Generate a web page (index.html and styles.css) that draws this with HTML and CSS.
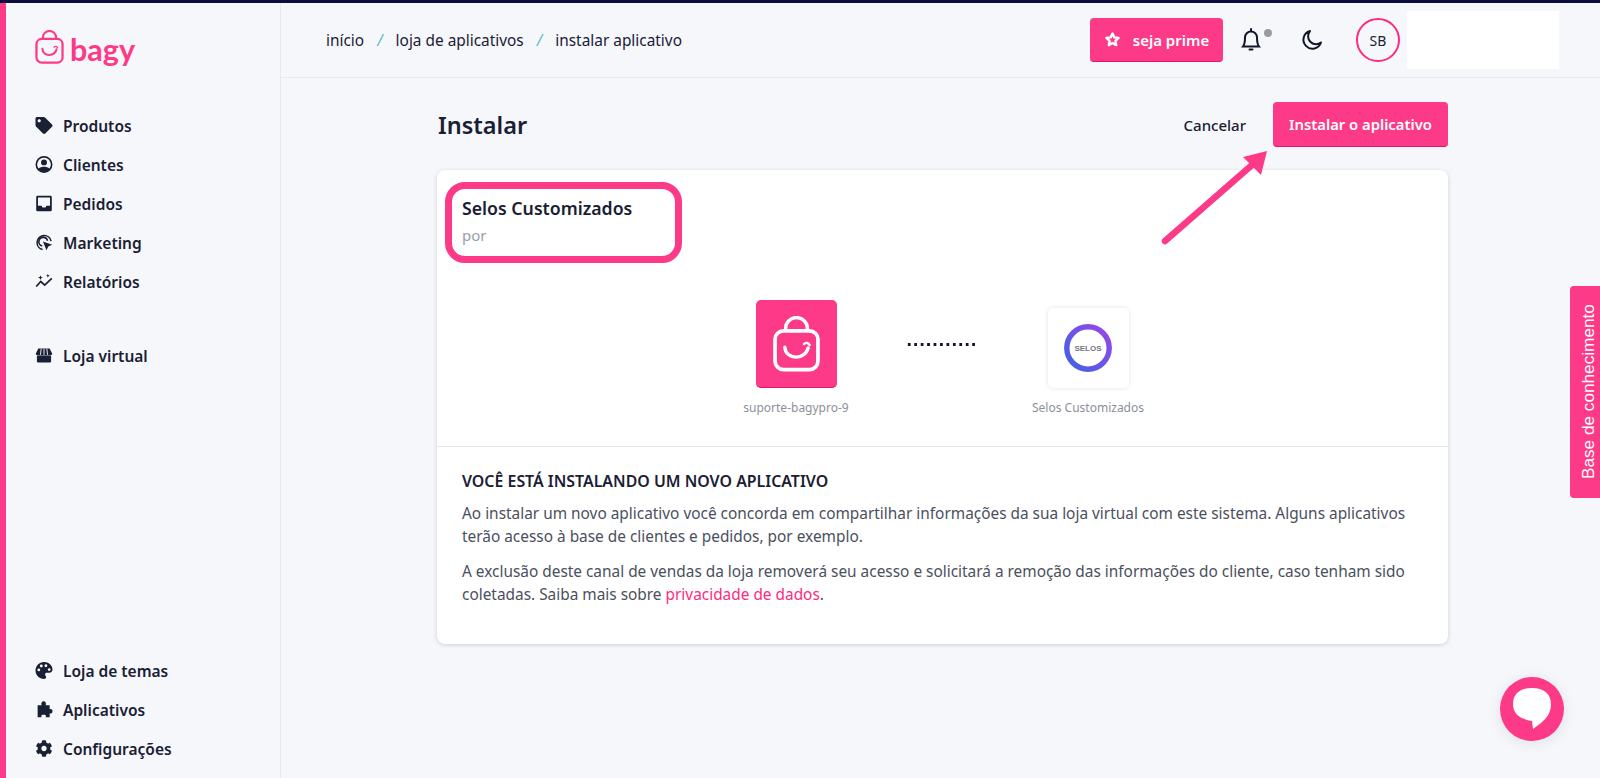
FILE: index.html
```html
<!DOCTYPE html>
<html lang="pt-BR">
<head>
    <meta charset="UTF-8">
    <meta name="viewport" content="width=device-width, initial-scale=1.0">
    <title>Instalar aplicativo</title>
    <link rel="stylesheet" href="styles.css">
</head>
<body>
    <svg class="defs" width="0" height="0">
        <symbol id="bag" viewBox="0 0 30 36">
            <path d="M8 9.500V8a7 7 0 0 1 14 0v1.500" fill="none" stroke="currentColor" stroke-width="2.200"/>
            <rect x="1.200" y="9.500" width="27.600" height="25" rx="5.500" fill="none" stroke="currentColor" stroke-width="2.400"/>
            <path d="M7.500 20c.5 8.500 13 8.500 15 .5" fill="none" stroke="currentColor" stroke-width="2.200" stroke-linecap="round"/>
            <path d="M19.800 18q2.300-1.600 3.600.6" fill="none" stroke="currentColor" stroke-width="1.500" stroke-linecap="round"/>
        </symbol>
    </svg>

    <div class="top-strip"></div>
    <div class="app">
        <!-- Sidebar -->
        <aside class="sidebar">
            <div class="logo">
                <svg class="logo-bag"><use href="#bag"/></svg>
                <span class="logo-text">bagy</span>
            </div>
            <nav class="nav-main">
                <a class="nav-item">
                    <svg class="nav-icon" viewBox="0 0 512 512"><path d="M0 252.118V48C0 21.49 21.49 0 48 0h204.118a48 48 0 0 1 33.941 14.059l211.882 211.882c18.745 18.745 18.745 49.137 0 67.882L293.823 497.941c-18.745 18.745-49.137 18.745-67.882 0L14.059 286.059A48 48 0 0 1 0 252.118zM112 64c-26.51 0-48 21.49-48 48s21.49 48 48 48 48-21.49 48-48-21.49-48-48-48z"/></svg>
                    Produtos
                </a>
                <a class="nav-item">
                    <svg class="nav-icon" viewBox="0 0 24 24"><path fill-rule="evenodd" d="M12 0a12 12 0 1 0 0 24 12 12 0 0 0 0-24zm0 2.500a9.500 9.500 0 0 1 7.700 15.100C17.800 15.800 15 15 12 15s-5.800.8-7.700 2.600A9.500 9.500 0 0 1 12 2.500z"/><circle cx="12" cy="9" r="4.200"/></svg>
                    Clientes
                </a>
                <a class="nav-item">
                    <svg class="nav-icon" viewBox="0 0 24 24"><path fill-rule="evenodd" d="M3 1h18a2 2 0 0 1 2 2v18a2 2 0 0 1-2 2H3a2 2 0 0 1-2-2V3a2 2 0 0 1 2-2zm.5 2.500V15h5l1.500 2.500h4l1.500-2.500h5V3.500z"/></svg>
                    Pedidos
                </a>
                <a class="nav-item">
                    <svg class="nav-icon" viewBox="0 0 24 24"><path d="M10 22A10 10 0 1 1 22 10" fill="none" stroke="currentColor" stroke-width="2.200"/><path d="M9.500 17A6.200 6.200 0 1 1 17 9.500" fill="none" stroke="currentColor" stroke-width="2.200"/><path d="M10.500 10.500l13 4.500-5.500 2.500-2.500 5.500z"/></svg>
                    Marketing
                </a>
                <a class="nav-item">
                    <svg class="nav-icon" viewBox="0 0 24 24"><path d="M1 19l6.500-7 5.500 5 10-9.500" fill="none" stroke="currentColor" stroke-width="2.400"/><path d="M7 3l1 2.500L10.500 6.500 8 7.500 7 10 6 7.500 3.500 6.500 6 5.500zM17.500 1l.8 2 2 .8-2 .8-.8 2-.8-2-2-.8 2-.8z"/></svg>
                    Relatórios
                </a>
                <a class="nav-item nav-store">
                    <svg class="nav-icon" viewBox="0 0 24 24"><path d="M4 2h16l3.500 7a3 3 0 0 1-3 3H3.500a3 3 0 0 1-3-3z"/><path d="M2 12.500h20V20a2 2 0 0 1-2 2H4a2 2 0 0 1-2-2z"/><path d="M8 2.500L7 11M16 2.500L17 11M12 2.500V11" stroke="#f7f8fc" stroke-width="1.300"/></svg>
                    Loja virtual
                </a>
            </nav>
            <nav class="nav-bottom">
                <a class="nav-item">
                    <svg class="nav-icon" viewBox="0 0 24 24"><path fill-rule="evenodd" d="M12 0C5.400 0 0 5.400 0 12s5.400 12 12 12c2 0 3-1.300 3-2.800 0-1.800-1.500-2.200-1.500-3.700 0-1.300 1-2.300 2.500-2.300h3.500c2.700 0 4.500-2.200 4.500-4.700C24 4.500 18.600 0 12 0zM4.700 13.200a2 2 0 1 1 0-4 2 2 0 0 1 0 4zm3.500-5.500a2 2 0 1 1 0-4 2 2 0 0 1 0 4zm6.500-.4a2 2 0 1 1 0-4 2 2 0 0 1 0 4zm4.600 5.400a2 2 0 1 1 0-4 2 2 0 0 1 0 4z"/></svg>
                    Loja de temas
                </a>
                <a class="nav-item">
                    <svg class="nav-icon" viewBox="0 0 24 24"><path d="M3 6h5.500C7.500 3 9 .5 11.500 .5S15.500 3 14.500 6H20v5.500c3-1 4 1 4 3s-1 4-4 3V23h-5.500c1-3-.5-3.500-3-3.500s-4 .5-3 3.500H3z"/></svg>
                    Aplicativos
                </a>
                <a class="nav-item">
                    <svg class="nav-icon" viewBox="0 0 512 512"><path d="M487.4 315.7l-42.6-24.6c4.3-23.2 4.3-47 0-70.2l42.6-24.6c4.9-2.8 7.1-8.6 5.5-14-11.1-35.6-30-67.8-54.7-94.6-3.8-4.1-10-5.1-14.8-2.3L380.8 110c-17.9-15.4-38.5-27.3-60.8-35.1V25.8c0-5.6-3.9-10.5-9.4-11.7-36.7-8.2-74.3-7.8-109.2 0-5.5 1.2-9.4 6.1-9.4 11.7V75c-22.2 7.9-42.8 19.8-60.8 35.1L88.7 85.5c-4.9-2.8-11-1.9-14.8 2.3-24.7 26.7-43.6 58.9-54.7 94.6-1.7 5.4.6 11.2 5.5 14L67.3 221c-4.3 23.2-4.3 47 0 70.2l-42.6 24.6c-4.9 2.8-7.1 8.6-5.5 14 11.1 35.6 30 67.8 54.7 94.6 3.8 4.1 10 5.1 14.8 2.3l42.6-24.6c17.9 15.4 38.5 27.3 60.8 35.1v49.2c0 5.6 3.9 10.5 9.4 11.7 36.7 8.2 74.3 7.8 109.2 0 5.5-1.2 9.4-6.1 9.4-11.7v-49.2c22.2-7.9 42.8-19.8 60.8-35.1l42.6 24.6c4.9 2.8 11 1.9 14.8-2.3 24.7-26.7 43.6-58.9 54.7-94.6 1.500-5.500-.7-11.300-5.600-14.100zM256 336c-44.100 0-80-35.900-80-80s35.900-80 80-80 80 35.900 80 80-35.900 80-80 80z"/></svg>
                    Configurações
                </a>
            </nav>
        </aside>

        <div class="main">
            <!-- Top bar -->
            <header class="topbar">
                <div class="breadcrumb">
                    <span>início</span><i>/</i><span>loja de aplicativos</span><i>/</i><span>instalar aplicativo</span>
                </div>
                <div class="top-actions">
                    <button class="prime-button">
                        <svg class="prime-star" viewBox="0 0 24 24"><path d="M12 3.500l2.600 5.500 6 .8-4.400 4.200 1.100 6L12 17l-5.300 3 1.100-6-4.400-4.200 6-.8z" fill="none" stroke="currentColor" stroke-width="3.400" stroke-linejoin="round"/></svg>
                        seja prime
                    </button>
                    <div class="bell">
                        <svg class="top-icon" viewBox="0 0 24 24"><path d="M12 3.500a6 6 0 0 0-6 6c0 5-.8 7.500-2 9h16c-1.200-1.500-2-4-2-9a6 6 0 0 0-6-6z" fill="none" stroke="currentColor" stroke-width="2"/><path d="M12 1v2M10.500 21.500h3" stroke="currentColor" stroke-width="2" stroke-linecap="round"/></svg>
                        <span class="bell-dot"></span>
                    </div>
                    <svg class="top-icon moon" viewBox="0 0 24 24"><path d="M10 3a9 9 0 1 0 11 11.500A8 8 0 0 1 10 3z" fill="none" stroke="currentColor" stroke-width="2" stroke-linejoin="round"/></svg>
                    <div class="avatar">SB</div>
                    <div class="store-blank"></div>
                </div>
            </header>

            <!-- Page -->
            <main class="page">
                <div class="page-head">
                    <h1>Instalar</h1>
                    <div class="page-actions">
                        <a class="cancel-link">Cancelar</a>
                        <button class="install-button">Instalar o aplicativo</button>
                    </div>
                </div>

                <section class="card">
                    <div class="card-title">
                        <h2>Selos Customizados</h2>
                        <p>por</p>
                    </div>
                    <div class="connect">
                        <div class="connect-item">
                            <div class="app-icon app-icon-bagy">
                                <svg class="app-bag"><use href="#bag"/></svg>
                            </div>
                            <span>suporte-bagypro-9</span>
                        </div>
                        <div class="connect-dots"></div>
                        <div class="connect-item">
                            <div class="app-icon app-icon-selos">
                                <svg class="selos-ring" viewBox="0 0 48 48">
                                    <defs>
                                        <linearGradient id="ring" x1="0" y1="1" x2="1" y2="0">
                                            <stop offset="0" stop-color="#3f62e6"/>
                                            <stop offset="1" stop-color="#9a45e8"/>
                                        </linearGradient>
                                    </defs>
                                    <circle cx="24" cy="24" r="21.200" fill="none" stroke="url(#ring)" stroke-width="5.400"/>
                                    <text x="24" y="27" text-anchor="middle" class="selos-text">SELOS</text>
                                </svg>
                            </div>
                            <span>Selos Customizados</span>
                        </div>
                    </div>
                    <div class="card-body">
                        <h3>VOCÊ ESTÁ INSTALANDO UM NOVO APLICATIVO</h3>
                        <p>Ao instalar um novo aplicativo você concorda em compartilhar informações da sua loja virtual com este sistema. Alguns aplicativos terão acesso à base de clientes e pedidos, por exemplo.</p>
                        <p>A exclusão deste canal de vendas da loja removerá seu acesso e solicitará a remoção das informações do cliente, caso tenham sido coletadas. Saiba mais sobre <a class="pink-link">privacidade de dados</a>.</p>
                    </div>
                </section>
            </main>
        </div>
    </div>

    <!-- Overlays -->
    <div class="highlight"></div>
    <svg class="arrow" viewBox="0 0 115 100">
        <path d="M5 93L92 17" stroke="#fd3a87" stroke-width="6.500" stroke-linecap="round"/>
        <path d="M107 3L83 9 101 27z" fill="#fd3a87"/>
    </svg>
    <a class="kb-tab">Base de conhecimento</a>
    <div class="chat-button">
        <svg viewBox="0 0 38 42"><path d="M19 0c12 0 19 6 19 16 0 8-4 14-10 19l-8 6-1-8C7 31 0 26 0 16 0 6 7 0 19 0z" fill="#fff"/></svg>
    </div>
</body>
</html>
```
FILE: styles.css
```css
* {
    box-sizing: border-box;
}

html, body {
    height: 100%;
}

body {
    margin: 0;
    font-family: "Noto Sans", Arial, sans-serif;
    background-color: #f6f7fb;
    color: #1a2033;
    display: flex;
    flex-direction: column;
    overflow: hidden;
}

.defs {
    display: block;
    height: 0;
}

.top-strip {
    height: 3px;
    background-color: #0c0c3c;
}

.app {
    flex: 1;
    display: flex;
    min-height: 0;
}

/* sidebar */
.sidebar {
    width: 281px;
    border-left: 6px solid #fd3a87;
    border-right: 1px solid #e8e9ee;
    padding: 26px 0 10px 29px;
    display: flex;
    flex-direction: column;
}

.logo {
    display: flex;
    align-items: flex-end;
    color: #fd3a87;
    height: 35px;
    margin-bottom: 42px;
}

.logo-bag {
    width: 29px;
    height: 34px;
}

.logo-text {
    font-family: "Lato", sans-serif;
    font-weight: 700;
    font-size: 30.5px;
    line-height: 30px;
    margin-left: 6px;
}

.nav-main {
    flex: 1;
}

.nav-item {
    display: flex;
    align-items: center;
    height: 39px;
    font-size: 15.5px;
    font-weight: 600;
    color: #1a2033;
    gap: 10px;
}

.nav-icon {
    width: 18px;
    height: 17px;
    fill: currentColor;
    flex-shrink: 0;
}

.nav-store {
    margin-top: 35px;
}

/* top bar */
.main {
    flex: 1;
    min-width: 0;
    display: flex;
    flex-direction: column;
}

.topbar {
    height: 75px;
    border-bottom: 1px solid #e8e9ee;
    display: flex;
    align-items: center;
    justify-content: space-between;
    padding-left: 45px;
    padding-right: 41px;
}

.breadcrumb {
    font-size: 15.4px;
    display: flex;
    align-items: center;
}

.breadcrumb i {
    color: #57bcc9;
    margin: 0 13px;
}

.top-actions {
    display: flex;
    align-items: center;
}

.prime-button {
    display: flex;
    align-items: center;
    justify-content: center;
    gap: 12px;
    width: 133px;
    height: 44px;
    background-color: #fd3a87;
    border: none;
    border-bottom: 1px solid #e0156b;
    border-radius: 4px;
    color: white;
    font-family: inherit;
    font-size: 15px;
    font-weight: 600;
}

.prime-star {
    width: 17px;
    height: 17px;
}

.bell {
    position: relative;
    margin-left: 16px;
    margin-right: 37px;
}

.top-icon {
    display: block;
    width: 24px;
    height: 24px;
    color: #11162a;
}

.bell-dot {
    position: absolute;
    top: 1px;
    right: -9px;
    width: 8px;
    height: 8px;
    border-radius: 50%;
    background-color: #9a9a9f;
}

.avatar {
    width: 44px;
    height: 44px;
    margin-left: 32px;
    border: 2px solid #fd2a7f;
    border-radius: 50%;
    display: flex;
    align-items: center;
    justify-content: center;
    font-size: 14px;
}

.store-blank {
    width: 152px;
    height: 58px;
    margin-left: 7px;
    background-color: white;
}

/* page */
.page {
    width: 1011px;
    margin-left: 156px;
}

.page-head {
    display: flex;
    align-items: center;
    justify-content: space-between;
    height: 92px;
    padding-top: 1px;
}

.page-head h1 {
    margin: 0 0 0 1px;
    font-size: 23.5px;
    font-weight: 600;
}

.page-actions {
    display: flex;
    align-items: center;
    gap: 27px;
}

.cancel-link {
    font-size: 15px;
    font-weight: 500;
}

.install-button {
    width: 175px;
    height: 45px;
    background-color: #fd3a87;
    border: none;
    border-bottom: 1px solid #e0156b;
    border-radius: 4px;
    color: white;
    font-family: inherit;
    font-size: 14.8px;
    font-weight: 600;
}

.card {
    background-color: white;
    border-radius: 8px;
    box-shadow: 0 1px 4px rgba(30, 35, 60, 0.18);
    height: 474px;
}

.card-title {
    padding: 26px 25px 0;
    height: 122px;
}

.card-title h2 {
    margin: 0;
    font-size: 17.7px;
    font-weight: 600;
    line-height: 24px;
}

.card-title p {
    margin: 3px 0 0;
    font-size: 15px;
    line-height: 24px;
    color: #9aa0aa;
}

.connect {
    display: flex;
    height: 155px;
    border-bottom: 1px solid #e6e7eb;
    padding: 8px 0 0 279px;
}

.connect-item {
    width: 160px;
    display: flex;
    flex-direction: column;
    align-items: center;
    font-size: 12px;
    line-height: 16px;
    color: #8b909a;
    gap: 12px;
}

.app-icon {
    width: 81px;
    height: 88px;
    display: flex;
    align-items: center;
    justify-content: center;
    border-radius: 5px;
}

.app-icon-bagy {
    background-color: #fd3a87;
    color: white;
    border-bottom: 1px solid #e0156b;
}

.app-bag {
    width: 47px;
    height: 56px;
}

.app-icon-selos {
    margin-top: 8px;
    height: 80px;
    background-color: white;
    box-shadow: 0 0 5px rgba(30, 35, 60, 0.12);
}

.selos-ring {
    width: 48px;
    height: 48px;
}

.selos-text {
    font-family: "Liberation Sans", Arial, sans-serif;
    font-size: 8px;
    font-weight: 700;
    fill: #77797f;
}

.connect-dots {
    width: 71px;
    height: 3px;
    margin: 43px 31px 0 30px;
    background-image: radial-gradient(circle, #11162a 1.4px, transparent 1.7px);
    background-size: 6.450px 3px;
}

.card-body {
    padding: 22px 25px 0;
    font-size: 15.4px;
    line-height: 23px;
    color: #4a4f5e;
}

.card-body h3 {
    margin: 0 0 9px;
    font-size: 15.9px;
    font-weight: 600;
    color: #1a2033;
    line-height: 24px;
}

.card-body p {
    margin: 0 0 12px;
}

.pink-link {
    color: #fd2a7f;
}

/* overlays */
.highlight {
    position: absolute;
    left: 445px;
    top: 182px;
    width: 237px;
    height: 81px;
    border: 7px solid #fd3a87;
    border-radius: 20px;
}

.arrow {
    position: absolute;
    left: 1160px;
    top: 148px;
    width: 115px;
    height: 100px;
}

.kb-tab {
    position: absolute;
    left: 1570px;
    top: 286px;
    width: 30px;
    height: 212px;
    display: flex;
    align-items: center;
    justify-content: center;
    padding-right: 6px;
    writing-mode: vertical-rl;
    transform: rotate(180deg);
    background-color: #fd3a87;
    border-radius: 0 4px 4px 0;
    color: white;
    font-family: "Liberation Sans", Arial, sans-serif;
    font-size: 17.2px;
}

.chat-button {
    position: absolute;
    left: 1500px;
    top: 677px;
    width: 64px;
    height: 64px;
    display: flex;
    align-items: center;
    justify-content: center;
    border-radius: 50%;
    background-color: #fd3a87;
    box-shadow: 0 2px 14px rgba(30, 35, 60, 0.1);
}

.chat-button svg {
    width: 38px;
    height: 42px;
}
```
